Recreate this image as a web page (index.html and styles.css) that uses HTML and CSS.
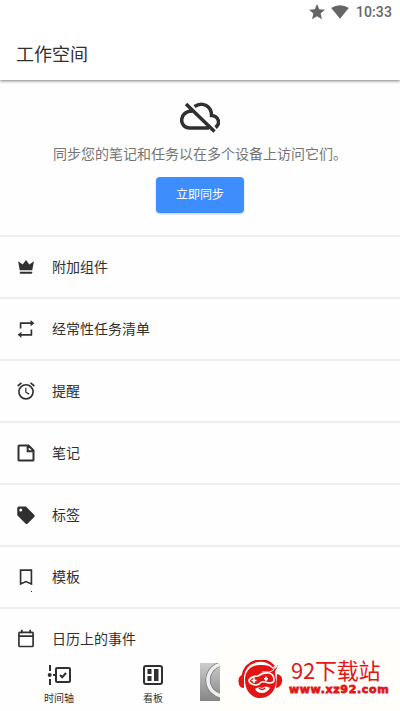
FILE: index.html
```html
<!DOCTYPE html>
<html lang="zh-CN">
<head>
<meta charset="utf-8">
<title>工作空间</title>
<link rel="stylesheet" href="styles.css">
</head>
<body>
<div class="screen">
  <header class="appbar">
    <div class="status">
      <svg class="star" width="16" height="16" viewBox="2 2 20 20"><path d="M12 17.27 18.18 21l-1.64-7.03L22 9.24l-7.19-.61L12 2 9.19 8.63 2 9.24l5.46 4.73L5.82 21z"/></svg>
      <svg class="wifi" width="18" height="14" viewBox="0 0 18 14"><path d="M9 13.800.2 3Q4 .2 9 .2T17.800 3z"/></svg>
      <span class="clock">10:33</span>
    </div>
    <h1 class="title">工作空间</h1>
  </header>
  <section class="sync">
    <svg class="cloud" width="40" height="40" viewBox="0 0 40 40"><path d="M6 7 34.500 34.500M14.500 9.500C23 4 31.500 9.500 31.500 18.500C38.500 19 41 26.500 35.500 30.500M12.500 14C-1.500 14-1.500 31 10 31H29"/></svg>
    <p class="hint">同步您的笔记和任务以在多个设备上访问它们。</p>
    <button class="sync-btn">立即同步</button>
  </section>
  <ul class="menu">
    <li class="row"><svg class="ico" viewBox="0 0 24 24"><path class="fill" d="M4.500 16 2.500 5l5.500 4L12 3.500 16 9l5.500-4-2 11zm15 3q0 1-1 1H5.500q-1 0-1-1v-1.200h15z"/></svg><span>附加组件</span></li>
    <li class="row"><svg class="ico" viewBox="0 0 24 24"><path class="fill" d="M5 4h12.500V1.200L22 5l-4.500 3.800V6H6.500v5.500H4.500V4.500zM19 20H6.500v2.800L2 19l4.500-3.800V18h11v-5.500h2v7z"/></svg><span>经常性任务清单</span></li>
    <li class="row"><svg class="ico" viewBox="0 0 24 24"><circle cx="12" cy="13" r="8.500"/><path d="m2 6 4.600-3.800M22 6l-4.600-3.800"/><path class="thin" d="M11.800 8v5.500l4 2.300"/></svg><span>提醒</span></li>
    <li class="row"><svg class="ico" viewBox="0 0 24 24"><path class="heavy" d="M4 3h11l6 6v11q0 1-1 1H4q-1 0-1-1V4q0-1 1-1zM14 3v7h7"/></svg><span>笔记</span></li>
    <li class="row"><svg class="ico" viewBox="0 0 24 24"><path class="fill" fill-rule="evenodd" d="M21.800 11.600 12.500 2.500C12 2 11.600 1.900 11 1.900H3.500Q1.500 1.900 1.500 4v7.500c0 .6.200 1 .6 1.400l9.300 9.300q1.300 1.200 2.700 0l7.700-7.700q1.300-1.400 0-2.900zM5.700 7.700a1.800 1.800 0 1 1 0-3.600 1.800 1.800 0 0 1 0 3.600z"/></svg><span>标签</span></li>
    <li class="row"><svg class="ico" viewBox="0 0 24 24"><path d="M5.500 3.800h13v16.500L12 17.500l-6.500 2.800z"/></svg><i class="speck"></i><span>模板</span></li>
    <li class="row"><svg class="ico" viewBox="0 0 24 24"><rect x="3.500" y="4" width="17" height="17" rx="1"/><path d="M3 8.500h18M7 1v4M17 1v4"/></svg><span>日历上的事件</span></li>
  </ul>
  <nav class="tabs">
    <div class="tab">
      <svg width="24" height="20" viewBox="0 0 24 20"><path d="M3 0v6M3 14v6M6 10h4"/><circle class="fill" cx="2.700" cy="10" r="2"/><rect x="9" y="3" width="14" height="14" rx="1"/><path d="m13 10 2.200 2.200L19 8"/></svg>
      <span>时间轴</span>
    </div>
    <div class="tab">
      <svg width="20" height="20" viewBox="0 0 20 20"><rect x="1" y="1" width="18" height="18" rx="2"/><path class="fill" d="M4.500 4h4v5h-4zM4.500 11h4v5h-4zM11 4h4.500v12H11z"/></svg>
      <span>看板</span>
    </div>
  </nav>
  <svg class="badge" width="20" height="38" viewBox="0 0 20 38"><defs><linearGradient id="g" x1="0" y1="0" x2="0" y2="1"><stop offset="0" stop-color="#ccc"/><stop offset="1" stop-color="#858585"/></linearGradient></defs><path fill="url(#g)" d="M0 0h20v38H0z"/><circle cx="24" cy="17" r="16" fill="none" stroke="#777" stroke-width="5"/><circle cx="24" cy="17" r="16" fill="none" stroke="#eee" stroke-width="3.600"/></svg>
  <div class="watermark">
    <svg width="46" height="40" viewBox="0 0 46 40">
      <path class="red" d="M6 15Q0 15 .5 22q.5 6 5.500 6zM39 14q6 1 5 8-1 5-6 6z"/>
      <path class="band" d="M4.500 17C7-1 28-4 36 6.500"/>
      <path class="red" d="M7 20C7 9 16 4 24 5q8 0 11 4l5-4-3 7 1 9c0 11-8 17-16 17C13 38 7 30 7 20z"/>
      <path class="cut" d="M39 6q-5 7-10 6h-5"/>
      <path class="glasses" d="M11 20q3-4 9-4 5-4 11-3 5 1 5 7 0 3-5 3l-4-1q-4-1-6 2-3 2-7 0-3-1-3-4z"/>
      <path class="cross" d="M16 18v5M13.500 20.500h5"/>
      <path class="cross" d="M28 16.500v4.500M26 18.700h4"/><circle class="red" cx="32" cy="18" r="1.200"/>
      <path class="cream" d="M17 29q4-3 7-1 4-3 8 0-3 5-8 5-5 0-7-4z"/><path class="smile" d="M21 28q3 3 6 0"/>
    </svg>
    <div class="wm-text"><b class="wm-name">92下载站</b><b class="wm-url">www.xz92.com</b></div>
  </div>
</div>
</body>
</html>
```
FILE: styles.css
```css
* { box-sizing: border-box; }
body { margin: 0; background: #fff; font-family: Roboto, "Noto Sans CJK SC", sans-serif; color: #303030; }
.screen { position: relative; width: 400px; height: 711px; overflow: hidden; display: flex; flex-direction: column; background: #fefefe; }
.appbar { flex: none; height: 80px; background: #fff; box-shadow: 0 1px 3px rgba(0,0,0,.5); }
.status { height: 24px; display: flex; justify-content: flex-end; align-items: center; padding-right: 8px; color: #666; fill: #666; }
.wifi { margin: 0 7px 0 6px; }
.clock { font-size: 14px; line-height: 24px; font-weight: 500; letter-spacing: .1px; }
.title { margin: 0; padding-left: 16px; font-size: 18px; font-weight: 400; line-height: 61px; }
.sync { flex: none; height: 157px; padding-top: 17px; display: flex; flex-direction: column; align-items: center; border-bottom: 2px solid #ededed; }
.cloud { flex: none; fill: none; stroke: #303030; stroke-width: 3.5; }
.hint { margin: 7px 0 13px; font-size: 14px; line-height: 20px; color: #757575; white-space: nowrap; }
.sync-btn { flex: none; width: 88px; height: 36px; padding: 0; border: 0; border-radius: 4px; background: #3d8dfd; color: #fff; font: 12px/34px Roboto, "Noto Sans CJK SC", sans-serif; box-shadow: 0 1px 2px rgba(61,141,253,.45); }
.menu { flex: 1; min-height: 0; overflow: hidden; margin: 0; padding: 0; list-style: none; }
.row { position: relative; height: 62px; display: flex; align-items: center; padding-left: 16px; gap: 16px; font-size: 14px; border-bottom: 2px solid #ededed; }
.row span { padding-bottom: 2px; }
.ico { width: 20px; height: 20px; flex: none; fill: none; stroke: #303030; stroke-width: 2; }
.ico .fill, .tab .fill { fill: #303030; stroke: none; }
.ico .thin { stroke-width: 1.5; }
.ico .heavy { stroke-width: 2.4; }
.speck { position: absolute; left: 31px; top: 44px; width: 1px; height: 1px; background: #303030; }
.tabs { flex: none; height: 54px; display: flex; padding-left: 12px; background: #fefefe; }
.tab { width: 94px; padding-top: 8px; display: flex; flex-direction: column; align-items: center; gap: 6px; font-size: 10px; line-height: 16px; }
.tab svg { fill: none; stroke: #303030; stroke-width: 2; }
.badge { position: absolute; left: 200px; top: 663px; }
.watermark { position: absolute; left: 220px; top: 641px; width: 180px; height: 70px; background: #fffefa; display: flex; padding: 19px 0 0 18px; }
.watermark svg { flex: none; }
.red { fill: #e31414; }
.cream { fill: #fffefa; }
.band { fill: none; stroke: #e31414; stroke-width: 2.5; }
.cut { fill: none; stroke: #fffefa; stroke-width: 1; }
.glasses { fill: #e31414; stroke: #fffefa; stroke-width: 1.7; }
.cross { stroke: #fffefa; stroke-width: 1.6; }
.smile { fill: none; stroke: #e31414; stroke-width: 1.3; }
.wm-text { display: flex; flex-direction: column; padding-left: 5px; color: #df1717; white-space: nowrap; }
.wm-name { font: 400 22px/22px "Noto Sans CJK SC", sans-serif; padding-left: 2px; letter-spacing: -.2px; margin-bottom: 3px; margin-top: -2px; }
.wm-url { font: 900 11px/14px "DejaVu Sans", sans-serif; letter-spacing: .65px; -webkit-text-stroke: .8px #df1717; }
```
